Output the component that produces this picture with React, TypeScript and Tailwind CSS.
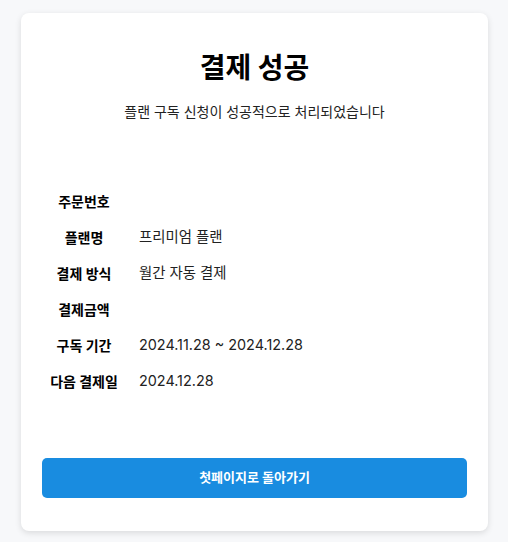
const rows: [string, string][] = [
  ['주문번호', ''],
  ['플랜명', '프리미엄 플랜'],
  ['결제 방식', '월간 자동 결제'],
  ['결제금액', ''],
  ['구독 기간', '2024.11.28 ~ 2024.12.28'],
  ['다음 결제일', '2024.12.28'],
];

export default function App() {
  return (
    <div
      className="min-h-screen bg-[#f7f8fa] pt-[13px] pl-[21px]"
      style={{ fontFamily: "Inter, 'Noto Sans CJK KR', sans-serif" }}
    >
      <div className="w-[467px] h-[518px] bg-white rounded-lg shadow-[0_2px_6px_rgba(0,0,0,0.12)] px-[21px] flex flex-col">
        <h1 className="mt-[38px] text-center text-[28px] leading-[34px] font-bold text-black">결제 성공</h1>
        <p className="mt-[17px] text-center text-[14px] leading-[20px] text-[#222]">
          플랜 구독 신청이 성공적으로 처리되었습니다
        </p>

        <div className="mt-[69px] flex flex-col gap-[16px]">
          {rows.map(([label, value]) => (
            <div key={label} className="flex items-center h-[20px] text-[14px]">
              <div className="w-[84px] text-center font-bold text-black">{label}</div>
              <div className="ml-[13px] text-[14.4px] text-[#222]">{value}</div>
            </div>
          ))}
        </div>

        <button className="mt-[67px] h-[40px] w-full rounded-[5px] bg-[#198ce0] text-white text-[13px] font-bold">
          첫페이지로 돌아가기
        </button>
      </div>
    </div>
  );
}
